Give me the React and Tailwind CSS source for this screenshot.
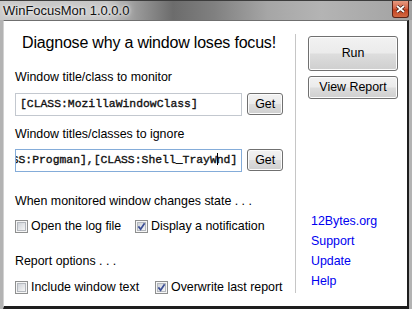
const ui = "font-['Liberation_Sans',Arial,sans-serif]";
const mono = "font-['Liberation_Mono','Courier_New',monospace]";

function CheckBox({ checked }) {
  return (
    <svg width="13" height="13" viewBox="0 0 13 13" className="shrink-0">
      <defs>
        <linearGradient id="cbfill" x1="0" y1="0" x2="1" y2="1">
          <stop offset="0" stopColor="#cdd1d7" />
          <stop offset="1" stopColor="#f8f8f8" />
        </linearGradient>
      </defs>
      <rect x="0.5" y="0.5" width="12" height="12" fill="#f6f6f6" stroke="#8e8f8f" />
      <rect x="2.5" y="2.5" width="8" height="8" fill="url(#cbfill)" stroke="#b4b8be" />
      {checked && (
        <path d="M3.4 6.4 L5.6 9.2 L9.6 3.2" fill="none" stroke="#3c4f96" strokeWidth="1.7" />
      )}
    </svg>
  );
}

function Check({ checked, label, width }) {
  return (
    <div className={`flex h-[13px] items-center gap-[3px] ${width}`}>
      <CheckBox checked={checked} />
      <span className="whitespace-nowrap leading-[15px]">{label}</span>
    </div>
  );
}

function WinButton({ children, className = "" }) {
  return (
    <button
      className={`flex items-center justify-center rounded-[3px] border border-[#707070] bg-[linear-gradient(180deg,#f2f2f2_0%,#ebebeb_48%,#dddddd_52%,#cfcfcf_100%)] text-[12.4px] leading-none text-black shadow-[inset_0_0_0_1px_#fcfcfc] ${className}`}
    >
      {children}
    </button>
  );
}

export default function App() {
  return (
    <div className={`flex h-[309px] w-[412px] flex-col overflow-hidden bg-[#b3b3b3] text-[12.4px] text-black ${ui}`}>
      {/* title bar */}
      <div className="flex h-[20px] shrink-0 items-start border-t border-[#3c3c3c] bg-[linear-gradient(90deg,#c9c9c9_0%,#c6c6c6_26%,#9a9a9a_33%,#6c6c6c_42%,#808080_52%,#a6a6a6_65%,#b4b4b4_78%,#a2a2a2_100%)]">
        <span className="ml-[3px] mt-[2px] text-[13px] leading-[16px] text-[#111] [text-shadow:0_0_6px_#f4f4f4,0_0_3px_#ffffff]">
          WinFocusMon 1.0.0.0
        </span>
        <div className="ml-auto mr-[3px] flex h-[17px] w-[17px] items-center justify-center rounded-b-[3px] border border-t-0 border-[#5a2216] bg-[linear-gradient(180deg,#e69a80_0%,#d7664a_45%,#c2401f_55%,#d36a43_100%)]">
          <svg width="9" height="8" viewBox="0 0 9 8">
            <path d="M1 1 L8 7 M8 1 L1 7" stroke="#3a1a12" strokeWidth="3.2" />
            <path d="M1 1 L8 7 M8 1 L1 7" stroke="#ffffff" strokeWidth="1.8" />
          </svg>
        </div>
      </div>

      {/* client area */}
      <div className="flex flex-1 px-[3px]">
        <div className="flex flex-1 border-b-[3px] border-l border-r-2 border-t border-b-[#1e1e1e] border-l-[#d2d2d2] border-r-[#1e1e1e] border-t-[#6f6f6f] bg-white">
          {/* left column */}
          <div className="flex w-[291px] flex-col pl-[11px] pr-[12px] pt-[12px]">
            <h1 className="h-[20px] text-center text-[16px] leading-[20px] tracking-[-0.2px]">
              Diagnose why a window loses focus!
            </h1>

            <div className="mt-[17px] h-[15px] leading-[15px]">Window title/class to monitor</div>
            <div className="mt-[8px] flex items-start gap-[5px]">
              <div className={`flex h-[23px] w-[229px] items-center overflow-hidden border border-[#c3c8cf] pl-[4px] text-[11.4px] text-[#111] [-webkit-text-stroke:0.35px_#111] ${mono}`}>
                <span className="whitespace-nowrap">[CLASS:MozillaWindowClass]</span>
              </div>
              <WinButton className="h-[22px] w-[36px]">Get</WinButton>
            </div>

            <div className="mt-[11px] h-[15px] leading-[15px]">Window titles/classes to ignore</div>
            <div className="mt-[7px] flex items-start gap-[5px]">
              <div className={`flex h-[23px] w-[229px] items-center justify-end overflow-hidden border border-[#84acd9] pr-[4px] text-[11.4px] text-[#111] [-webkit-text-stroke:0.35px_#111] ${mono}`}>
                <span className="shrink-0 whitespace-nowrap">
                  [CLASS:Progman],[CLASS:Shell_TrayW
                  <span className="-mr-px inline-block h-[12px] w-px bg-black align-[-2px]" />
                  nd]
                </span>
              </div>
              <WinButton className="h-[22px] w-[36px]">Get</WinButton>
            </div>

            <div className="mt-[22px] h-[15px] leading-[15px]">When monitored window changes state . . .</div>
            <div className="mt-[11px] flex">
              <Check width="w-[120px]" label="Open the log file" />
              <Check checked label="Display a notification" />
            </div>

            <div className="mt-[21px] h-[15px] leading-[15px]">Report options . . .</div>
            <div className="mt-[12px] flex">
              <Check width="w-[140px]" label="Include window text" />
              <Check checked label="Overwrite last report" />
            </div>
          </div>

          {/* separator */}
          <div className="my-[13px] w-px bg-[#c6c6c6]" />

          {/* right column */}
          <div className="flex flex-1 flex-col pb-[15px] pl-[12px] pt-[15px]">
            <WinButton className="h-[35px] w-[90px]">Run</WinButton>
            <WinButton className="mt-[5px] h-[23px] w-[90px]">View Report</WinButton>
            <div className="mt-auto flex flex-col pl-[3px] leading-[20px] text-[#0000f0]">
              <a href="#">12Bytes.org</a>
              <a href="#">Support</a>
              <a href="#">Update</a>
              <a href="#">Help</a>
            </div>
          </div>
        </div>
      </div>
    </div>
  );
}
